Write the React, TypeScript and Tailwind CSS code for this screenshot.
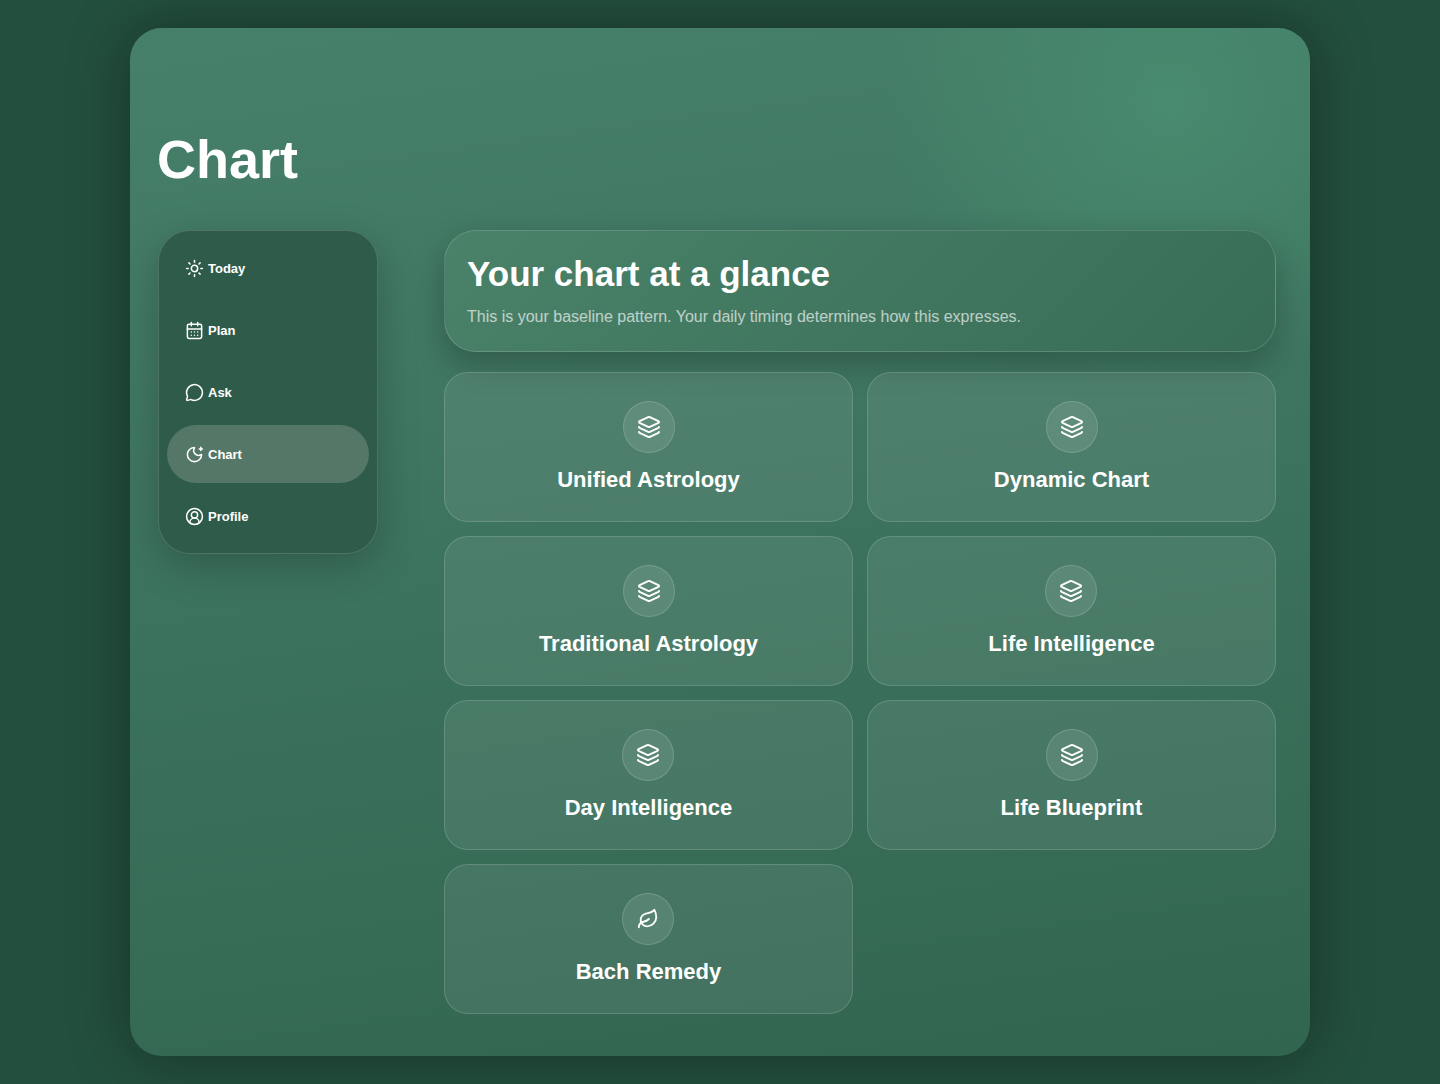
import { Sun, CalendarDays, MessageCircle, MoonStar, CircleUserRound, Layers, Leaf } from "lucide-react";

const nav = [
  { label: "Today", Icon: Sun },
  { label: "Plan", Icon: CalendarDays },
  { label: "Ask", Icon: MessageCircle },
  { label: "Chart", Icon: MoonStar, active: true },
  { label: "Profile", Icon: CircleUserRound },
];

const cards = [
  { label: "Unified Astrology", Icon: Layers, size: 24, nudge: "" },
  { label: "Dynamic Chart", Icon: Layers, size: 24, nudge: "" },
  { label: "Traditional Astrology", Icon: Layers, size: 24, nudge: "" },
  { label: "Life Intelligence", Icon: Layers, size: 24, nudge: "mr-[2px]" },
  { label: "Day Intelligence", Icon: Layers, size: 24, nudge: "mr-[2px]" },
  { label: "Life Blueprint", Icon: Layers, size: 24, nudge: "" },
  { label: "Bach Remedy", Icon: Leaf, size: 22, nudge: "mr-[2px]" },
];

export default function App() {
  return (
    <div className="h-[1084px] bg-[#234f3e] py-[28px] px-[130px] font-['Liberation_Sans',Arial,sans-serif] text-white overflow-hidden">
      <div className="h-[1028px] rounded-[32px] overflow-hidden shadow-[0_0_60px_rgba(0,0,0,0.35)] bg-[radial-gradient(circle_at_88%_7%,#488b6f_0%,rgba(72,139,111,0)_20%),linear-gradient(172deg,#47806a_0%,#3c735e_50%,#326550_100%)] pl-[28px] pr-[34px] pt-[99px]">
        <h1 className="text-[54px] leading-[64px] font-bold -ml-[1px]">Chart</h1>
        <div className="flex gap-[66px] mt-[39px]">
          <nav className="w-[220px] h-[324px] shrink-0 rounded-[32px] border border-white/15 bg-[#2f5b4a] p-[8px] flex flex-col gap-[4px] shadow-[0_12px_40px_rgba(0,0,0,0.22)]">
            {nav.map(({ label, Icon, active }) => (
              <div key={label} className={`h-[58px] shrink-0 rounded-full flex items-center gap-[4px] pl-[18px] text-[13px] font-bold ${active ? "bg-[#557768]" : ""}`}>
                <Icon size={19} strokeWidth={1.9} />
                <span className="mt-[2px]">{label}</span>
              </div>
            ))}
          </nav>
          <main className="w-[832px]">
            <header className="h-[122px] rounded-[32px] border border-white/15 bg-[linear-gradient(135deg,#4a8269,#386c56)] px-[22px] pt-[21px] shadow-[0_12px_32px_rgba(0,0,0,0.24)]">
              <h2 className="text-[35px] leading-[44px] font-bold">Your chart at a glance</h2>
              <p className="mt-[9px] text-[16px] leading-[24px] text-white/65">This is your baseline pattern. Your daily timing determines how this expresses.</p>
            </header>
            <div className="grid grid-cols-2 gap-[14px] mt-[20px]">
              {cards.map(({ label, Icon, size, nudge }) => (
                <div key={label} className="h-[150px] rounded-[24px] border border-white/15 bg-white/[0.08] pt-[28px] flex flex-col items-center">
                  <div className={`w-[52px] h-[52px] rounded-full border border-white/15 bg-white/10 flex items-center justify-center ${nudge}`}>
                    <Icon size={size} strokeWidth={2} />
                  </div>
                  <div className="mt-[13px] text-[22px] leading-[28px] font-bold">{label}</div>
                </div>
              ))}
            </div>
          </main>
        </div>
      </div>
    </div>
  );
}
